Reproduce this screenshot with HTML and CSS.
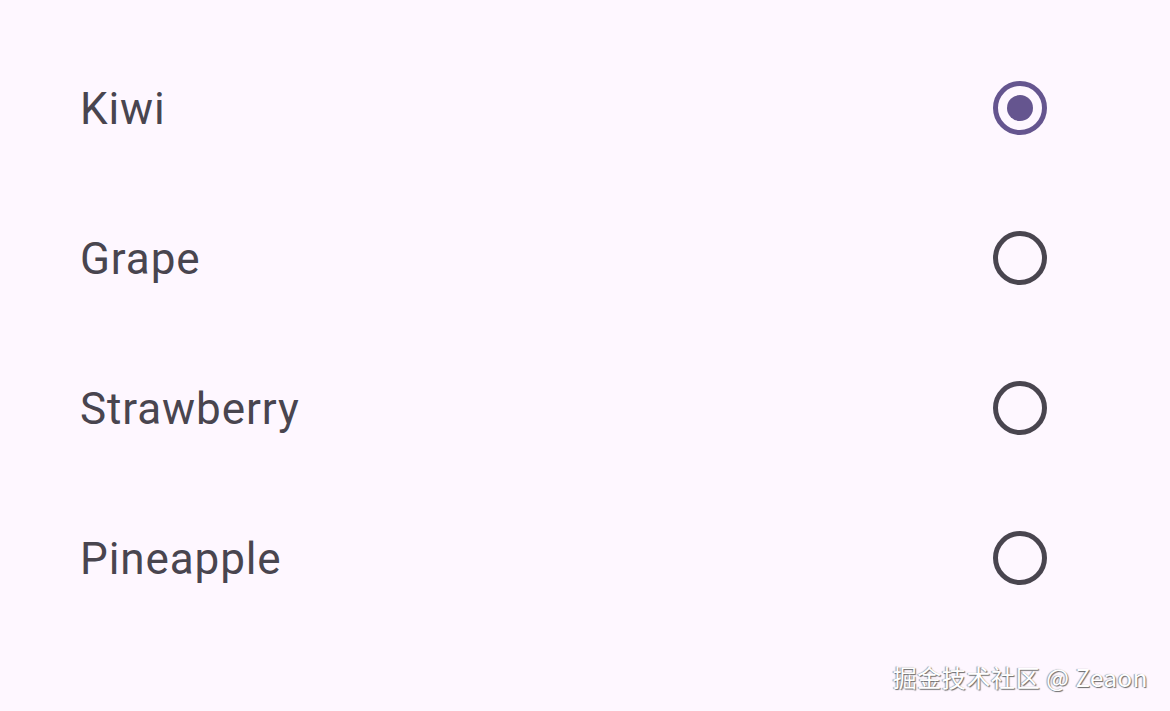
FILE: index.html
```html
<!DOCTYPE html>
<html>
<head>
<meta charset="utf-8">
<link rel="stylesheet" href="styles.css">
</head>
<body>
<div class="screen">
  <ul class="list">
    <li class="row">
      <span class="label">Kiwi</span>
      <svg class="radio" viewBox="0 0 54 54" width="54" height="54"><circle cx="27" cy="27" r="24.5" fill="none" stroke="#65558F" stroke-width="5"/><circle cx="27" cy="27" r="13" fill="#65558F"/></svg>
    </li>
    <li class="row">
      <span class="label">Grape</span>
      <svg class="radio" viewBox="0 0 54 54" width="54" height="54"><circle cx="27" cy="27" r="24.5" fill="none" stroke="#49454F" stroke-width="5"/></svg>
    </li>
    <li class="row">
      <span class="label">Strawberry</span>
      <svg class="radio" viewBox="0 0 54 54" width="54" height="54"><circle cx="27" cy="27" r="24.5" fill="none" stroke="#49454F" stroke-width="5"/></svg>
    </li>
    <li class="row">
      <span class="label">Pineapple</span>
      <svg class="radio" viewBox="0 0 54 54" width="54" height="54"><circle cx="27" cy="27" r="24.5" fill="none" stroke="#49454F" stroke-width="5"/></svg>
    </li>
  </ul>
  <div class="watermark">掘金技术社区 @ Zeaon</div>
</div>
</body>
</html>
```
FILE: styles.css
```css
html, body {
  margin: 0;
  padding: 0;
  background: #FEF7FF;
}
.screen {
  width: 1170px;
  height: 711px;
  position: relative;
  overflow: hidden;
  background: #FEF7FF;
  font-family: Roboto, "Noto Sans", sans-serif;
}
.list {
  list-style: none;
  margin: 0;
  padding: 33px 0 0 0;
}
.row {
  height: 150px;
  display: flex;
  align-items: center;
  justify-content: space-between;
  padding: 0 123px 0 80px;
}
.label {
  font-size: 44px;
  color: #49454F;
  letter-spacing: 0.9px;
  line-height: 1;
  padding-top: 2px;
}
.radio {
  display: block;
}
.watermark {
  position: absolute;
  right: 22px;
  top: 659px;
  font-family: "Noto Sans CJK SC", "Noto Sans", sans-serif;
  font-size: 24px;
  color: #ffffff;
  text-shadow: 1px 1px 1px #6a6a6a, -1px 0 1px #9a9a9a;
  letter-spacing: 0.6px;
}
```
